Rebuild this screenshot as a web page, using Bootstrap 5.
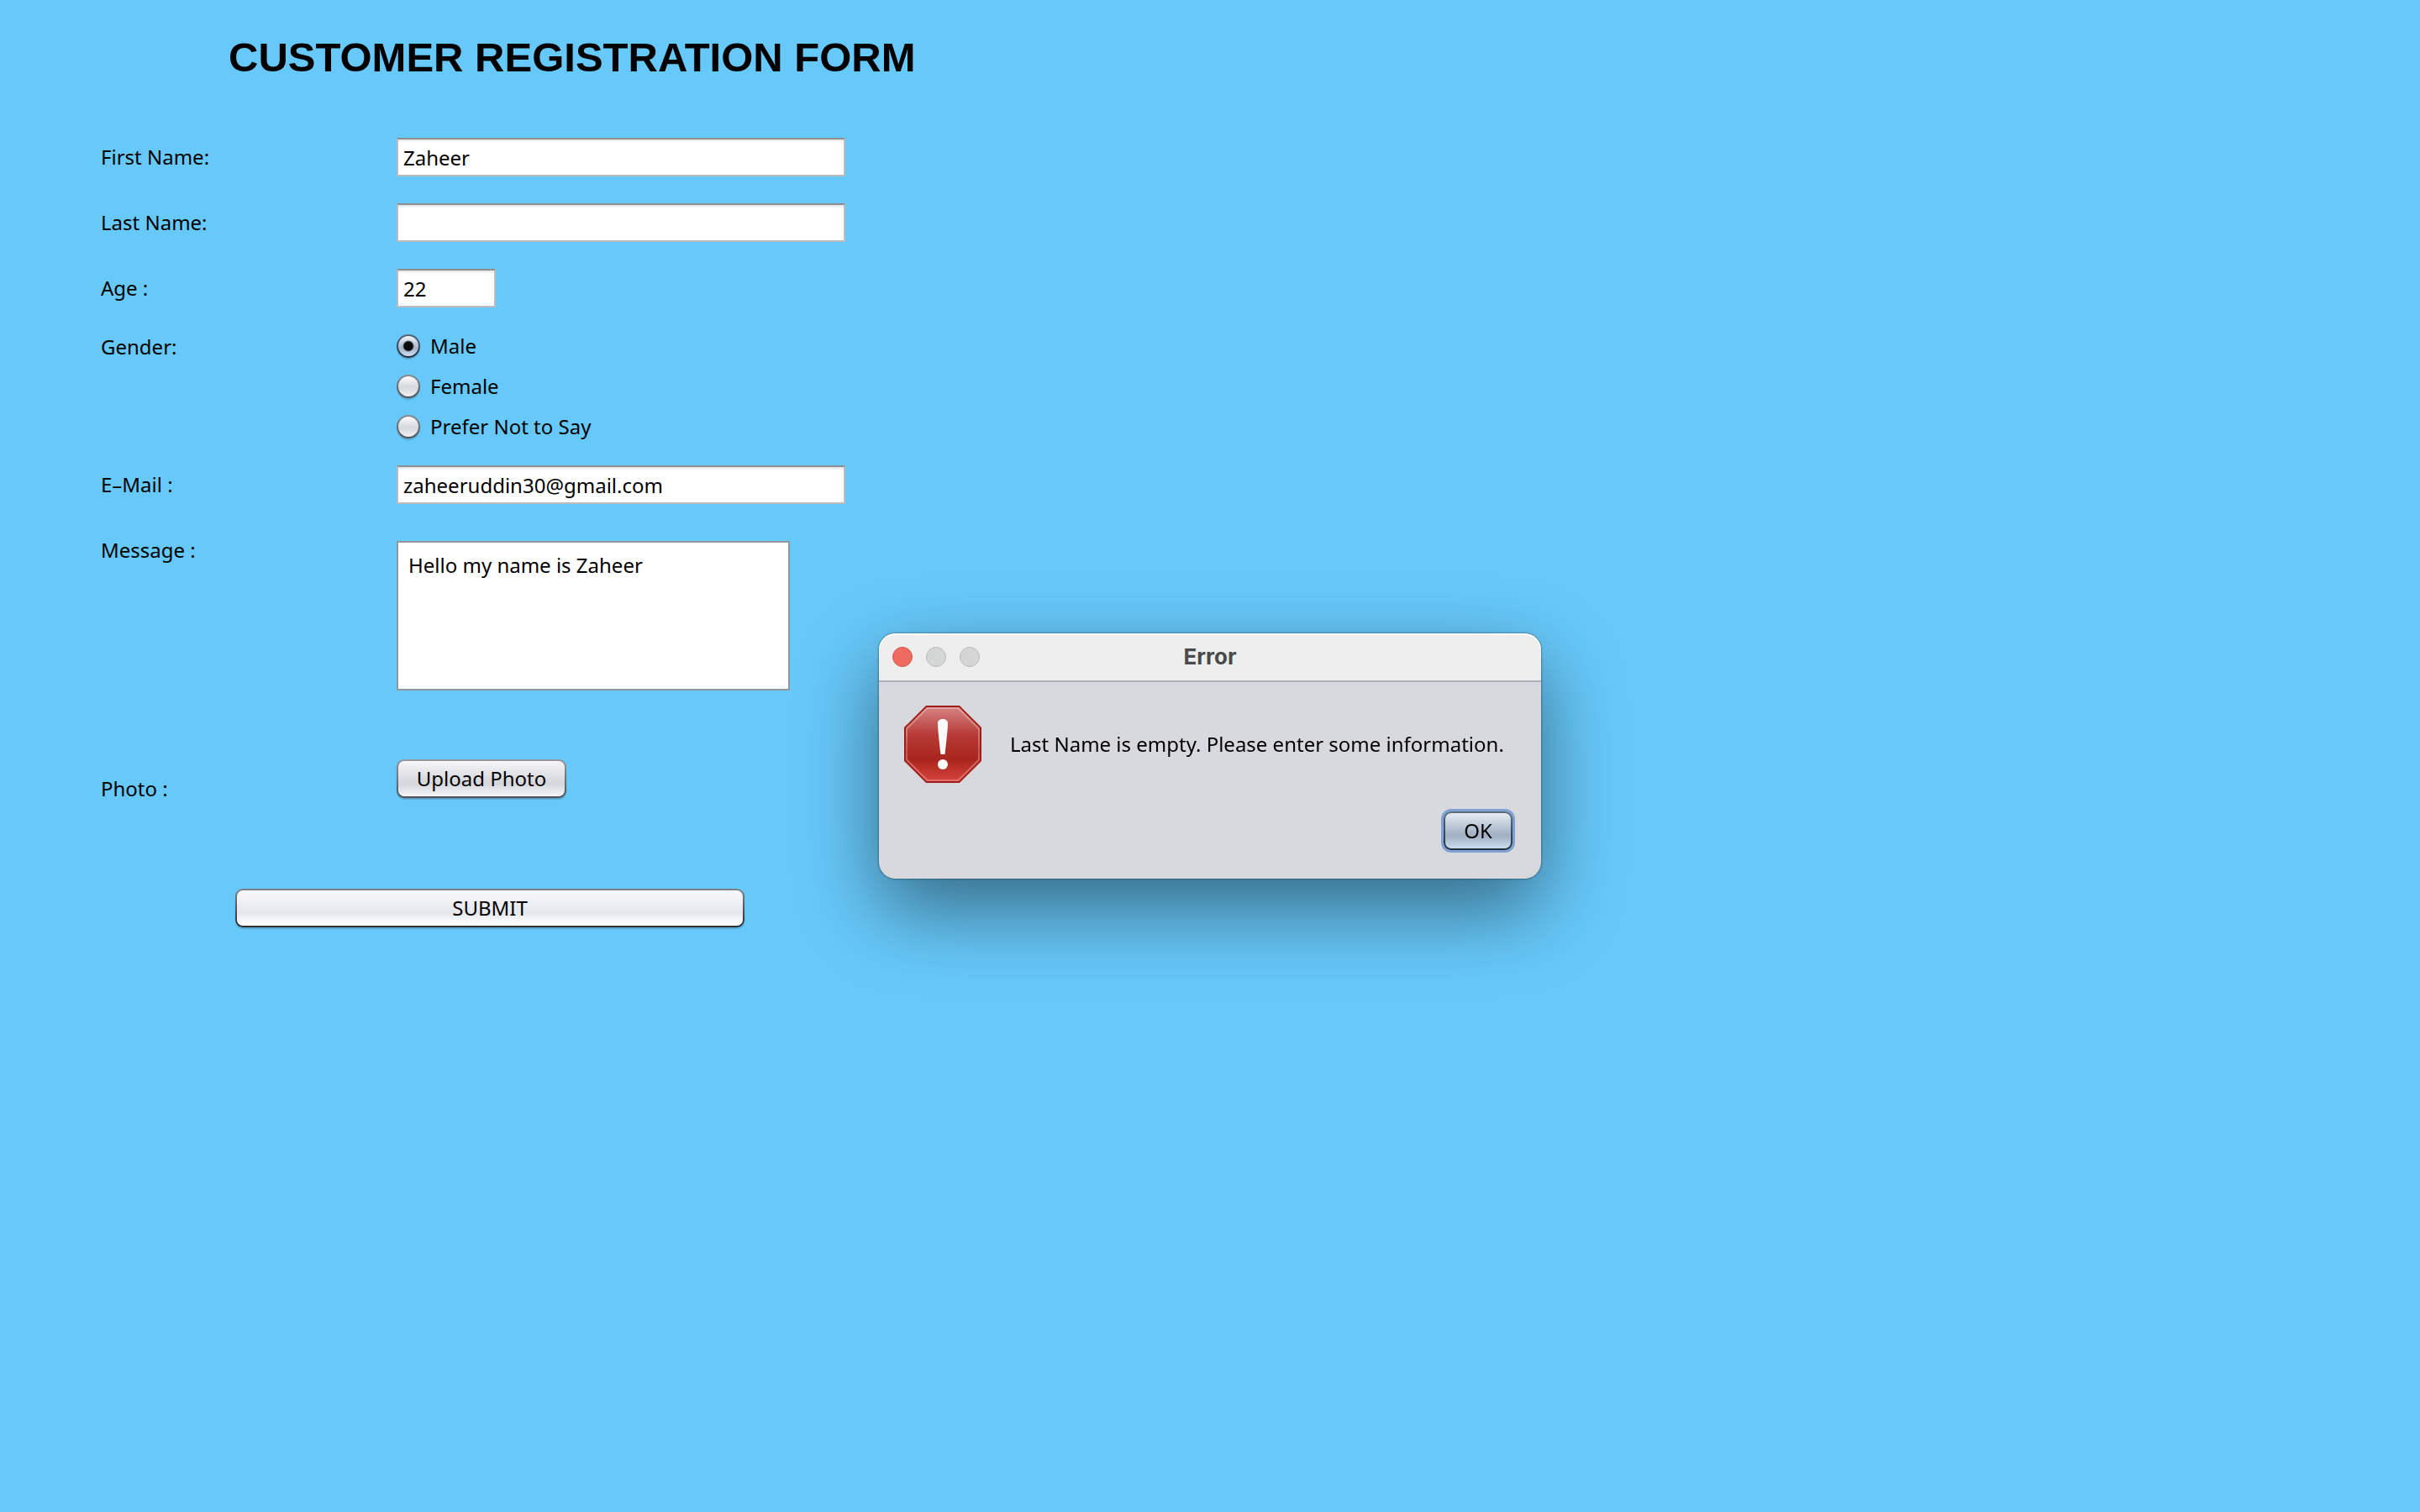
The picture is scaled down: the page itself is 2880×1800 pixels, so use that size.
<!DOCTYPE html>
<html lang="en">
<head>
<meta charset="utf-8">
<meta name="viewport" content="width=device-width, initial-scale=1">
<title>Customer Registration Form</title>
<link rel="stylesheet" href="https://cdn.jsdelivr.net/npm/bootstrap@5.3.0/dist/css/bootstrap.min.css">
<style>
  body {
    background: #67c9fa;
    color: #000;
    font-family: "Noto Sans", "Open Sans", sans-serif;
    font-size: 24px;
    line-height: 46px;
    min-height: 100vh;
  }
  .reg-form { padding: 38px 120px; }
  .form-title {
    font-family: "Liberation Sans", Arial, sans-serif;
    font-size: 49px;
    line-height: 60px;
    padding-left: 152px;
    margin-bottom: 66px;
  }
  .field-row { margin-bottom: 32px; }
  .field-row.tight { margin-bottom: 22px; }
  .field-label { flex: 0 0 352px; }
  .gender-row .field-label, .option-row label { line-height: 50px; }
  .form-control.swing-field {
    width: 534px;
    height: 46px;
    padding: 0 6px;
    border: 2px solid #bcbcbc;
    border-top-color: #8e8e8e;
    border-radius: 0;
    color: #000;
    background: linear-gradient(#dcdcdc, #f4f4f4 2px, #fff 4px);
    font-size: 24px;
    line-height: 42px;
  }
  .form-control.swing-field.age-field { width: 118px; }
  .form-control.swing-area {
    width: 468px;
    height: 178px;
    margin-top: 12px;
    padding: 9px 12px;
    border: 2px solid #92969d;
    border-radius: 0;
    color: #000;
    font-size: 24px;
    line-height: 36px;
    resize: none;
  }
  .option-row { height: 48px; gap: 12px; }
  .form-check-input.swing-radio {
    width: 28px;
    height: 28px;
    margin: 0;
    background: linear-gradient(#fcfcfd, #d9dadf 50%, #d9dadf 60%, #f0f1f5) padding-box,
      linear-gradient(#8b8e94, #4c4e54) border-box;
    border: 2px solid transparent;
    box-shadow: 0 2px 1px rgba(60, 80, 100, .25);
  }
  .form-check-input.swing-radio:checked {
    background: radial-gradient(circle, #0c0c0e 5px, transparent 7px),
      linear-gradient(#f3f5f9, #a9bacd 55%, #a9bacd 65%, #cfe0f2) padding-box,
      linear-gradient(#5a6779, #1c2f44) border-box;
  }
  .btn.swing-btn {
    height: 46px;
    padding: 0 22px;
    border: 2px solid transparent;
    border-radius: 9px;
    color: #000;
    font-size: 24px;
    line-height: 42px;
    background: linear-gradient(#f6f6f8, #d6d7dd 60%, #d6d7dd 65%, #f4f5fb) padding-box,
      linear-gradient(#95979b, #4c4e54) border-box;
    box-shadow: 0 2px 1px rgba(60, 80, 100, .3);
  }
  .btn.upload-btn { width: 202px; padding: 0; }
  .photo-row { margin-top: 82px; margin-bottom: 96px; }
  .photo-row .field-label { padding-top: 12px; }
  .btn.submit-btn {
    width: 606px;
    margin-left: 160px;
    background: linear-gradient(#fafafc, #e6e8ef 60%, #e6e8ef 65%, #fff 95%) padding-box,
      linear-gradient(#808288, #2c2e34) border-box;
  }
  .error-dialog {
    width: 788px;
    border-radius: 20px;
    background: #d8d9df;
    box-shadow: 0 0 2px 1px rgba(0, 0, 0, .3), 0 36px 96px rgba(0, 0, 0, .48);
  }
  .title-strip {
    height: 58px;
    padding: 0 16px;
    background: #eeeeee;
    border-bottom: 2px solid #b2b2bb;
    border-radius: 20px 20px 0 0;
    box-shadow: inset 0 2px 0 #fafafa;
  }
  .title-strip .side { flex: 1 1 0; gap: 16px; }
  .dialog-title {
    font-family: Inter, Roboto, sans-serif;
    font-size: 26px;
    line-height: 54px;
    font-weight: 700;
    color: #4a4a4a;
  }
  .window-dot {
    width: 24px;
    height: 24px;
    padding: 0;
    border: 1px solid #b9bbba;
    border-radius: 50%;
    background: #d3d6d5;
  }
  .window-dot.close-dot { background: #ed6b5f; border-color: #d6564b; }
  .dialog-main { padding: 28px 30px 0; gap: 34px; }
  .dialog-main svg { flex: none; }
  .dialog-actions { padding: 34px 34px; }
  .btn.ok-btn {
    width: 82px;
    padding: 0;
    background: linear-gradient(#e6ecf3, #a2b2c4 60%, #a2b2c4 65%, #cbdced) padding-box,
      linear-gradient(#5f6d80, #1d2c40) border-box;
    box-shadow: 0 0 0 3px #7ea1d2;
  }
</style>
<script src="https://cdn.jsdelivr.net/npm/bootstrap@5.3.0/dist/js/bootstrap.bundle.min.js"></script>
</head>
<body>
<form class="reg-form">
  <h1 class="form-title fw-bold">CUSTOMER REGISTRATION FORM</h1>

  <div class="field-row d-flex">
    <label class="field-label" for="firstName">First Name:</label>
    <input class="form-control swing-field" type="text" id="firstName" value="Zaheer">
  </div>
  <div class="field-row d-flex">
    <label class="field-label" for="lastName">Last Name:</label>
    <input class="form-control swing-field" type="text" id="lastName">
  </div>
  <div class="field-row tight d-flex">
    <label class="field-label" for="age">Age :</label>
    <input class="form-control swing-field age-field" type="text" id="age" value="22">
  </div>
  <div class="field-row tight gender-row d-flex align-items-start" role="radiogroup" aria-labelledby="genderLabel">
    <div class="field-label" id="genderLabel">Gender:</div>
    <div class="d-flex flex-column">
      <div class="option-row d-flex align-items-center">
        <input class="form-check-input swing-radio" type="radio" name="gender" id="male" checked>
        <label for="male">Male</label>
      </div>
      <div class="option-row d-flex align-items-center">
        <input class="form-check-input swing-radio" type="radio" name="gender" id="female">
        <label for="female">Female</label>
      </div>
      <div class="option-row d-flex align-items-center">
        <input class="form-check-input swing-radio" type="radio" name="gender" id="unsaid">
        <label for="unsaid">Prefer Not to Say</label>
      </div>
    </div>
  </div>
  <div class="field-row d-flex">
    <label class="field-label" for="email">E–Mail :</label>
    <input class="form-control swing-field" type="text" id="email" value="zaheeruddin30@gmail.com">
  </div>
  <div class="d-flex align-items-start">
    <label class="field-label" for="message">Message :</label>
    <textarea class="form-control swing-area" id="message">Hello my name is Zaheer</textarea>
  </div>
  <div class="photo-row d-flex align-items-start">
    <label class="field-label" for="photo">Photo :</label>
    <button class="btn swing-btn upload-btn" type="button" id="photo">Upload Photo</button>
  </div>
  <button class="btn swing-btn submit-btn d-block" type="button">SUBMIT</button>
</form>

<div class="error-dialog position-fixed top-50 start-50 translate-middle" role="alertdialog" aria-labelledby="dialogTitle" aria-describedby="dialogText">
  <div class="title-strip d-flex align-items-center">
    <div class="side d-flex align-items-center">
      <button class="window-dot close-dot" type="button" aria-label="Close"></button>
      <button class="window-dot" type="button" aria-label="Minimize" disabled></button>
      <button class="window-dot" type="button" aria-label="Zoom" disabled></button>
    </div>
    <div class="dialog-title" id="dialogTitle">Error</div>
    <div class="side"></div>
  </div>
  <div class="dialog-main d-flex align-items-center">
    <svg width="92" height="92" viewBox="0 0 92 92" aria-hidden="true">
      <defs>
        <linearGradient id="stopFill" x1="0" y1="0" x2="0" y2="1">
          <stop offset="0" stop-color="#d68584"/>
          <stop offset=".38" stop-color="#b73a36"/>
          <stop offset=".7" stop-color="#a8251c"/>
          <stop offset="1" stop-color="#d8443f"/>
        </linearGradient>
        <linearGradient id="stopRim" x1="0" y1="0" x2="0" y2="1">
          <stop offset="0" stop-color="#e0a3a3"/>
          <stop offset=".6" stop-color="#c05a56"/>
          <stop offset="1" stop-color="#e2706c"/>
        </linearGradient>
      </defs>
      <path d="M26.500 1h39L91 26.500v39L65.500 91h-39L1 65.500v-39z" fill="url(#stopFill)" stroke="#9f1d16" stroke-width="2"/>
      <path d="M27.500 3h37L89 27.500v37L64.500 89h-37L3 64.500v-37z" fill="none" stroke="url(#stopRim)" stroke-width="2"/>
      <path d="M40 21c0-3.500 2.500-5 6-5s6 1.500 6 5c0 7-2 24-3.500 37h-5C42 45 40 28 40 21z" fill="#fafafa"/>
      <circle cx="46" cy="70" r="6" fill="#fafafa"/>
    </svg>
    <div class="text-nowrap" id="dialogText">Last Name is empty. Please enter some information.</div>
  </div>
  <div class="dialog-actions d-flex justify-content-end">
    <button class="btn swing-btn ok-btn" type="button">OK</button>
  </div>
</div>
</body>
</html>
